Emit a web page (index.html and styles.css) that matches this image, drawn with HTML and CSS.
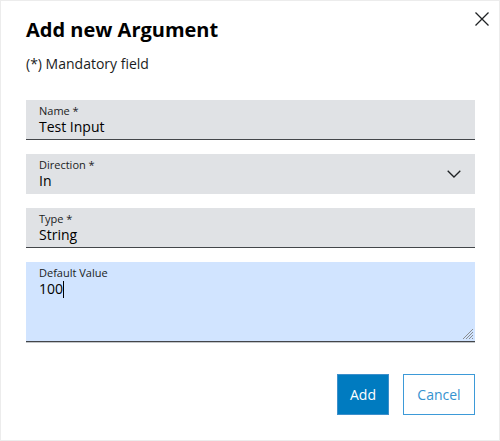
FILE: index.html
```html
<!DOCTYPE html>
<html lang="en">
<head>
<meta charset="utf-8">
<title>Add new Argument</title>
<link rel="stylesheet" href="styles.css">
</head>
<body>
<div class="dialog">
  <div class="header">
    <h1 class="title">Add new Argument</h1>
    <button class="close" aria-label="Close">
      <svg width="14" height="14" viewBox="0 0 14 14"><path d="M0.5 0.5 L13.5 13.5 M13.5 0.5 L0.5 13.5" stroke="#1f2224" stroke-width="1.3" fill="none"/></svg>
    </button>
  </div>
  <div class="body">
    <p class="hint">(*) Mandatory field</p>
    <div class="fields">
      <div class="field underline">
        <span class="label">Name *</span>
        <span class="value">Test Input</span>
      </div>
      <div class="field select">
        <div class="field-text">
          <span class="label">Direction *</span>
          <span class="value">In</span>
        </div>
        <svg class="chevron" width="14" height="8" viewBox="0 0 14 8"><path d="M0.7 0.7 L7 7 L13.3 0.7" stroke="#1f2224" stroke-width="1.3" fill="none"/></svg>
      </div>
      <div class="field underline">
        <span class="label">Type *</span>
        <span class="value">String</span>
      </div>
      <div class="field area underline">
        <span class="label">Default Value</span>
        <span class="value">100<span class="caret"></span></span>
        <svg class="grip" width="11" height="11" viewBox="0 0 11 11"><path d="M11 1 L1 11 M11 4 L4 11 M11 7 L7 11 M11 10 L10 11" stroke="#8a8d90" stroke-width="1" fill="none"/></svg>
      </div>
    </div>
    <div class="actions">
      <button class="btn primary">Add</button>
      <button class="btn secondary">Cancel</button>
    </div>
  </div>
</div>
</body>
</html>
```

FILE: styles.css
```css
* { box-sizing: border-box; }
html, body { margin: 0; padding: 0; background: #fff; }
body { font-family: "Open Sans", "Noto Sans", sans-serif; color: #1a1c1d; }
.dialog {
  width: 500px;
  height: 441px;
  border: 1px solid #ececec;
  background: #fff;
}
.header {
  display: flex;
  justify-content: space-between;
  align-items: flex-start;
  padding: 11px 10px 0 25px;
}
.title {
  margin: 4px 0 0 0;
  font-size: 20px;
  line-height: 28px;
  font-weight: 700;
  color: #000;
}
.close {
  border: 0;
  background: none;
  padding: 0;
  width: 14px;
  height: 14px;
  display: block;
  cursor: pointer;
}
.close svg { display: block; }
.body { padding: 0 24px 0 25px; }
.hint {
  margin: 10px 0 0 0;
  font-size: 14px;
  line-height: 20px;
}
.fields {
  margin-top: 26px;
  display: flex;
  flex-direction: column;
  gap: 14px;
}
.field {
  height: 40px;
  background: #e0e2e5;
  padding: 4px 13px 0 13px;
  display: flex;
  flex-direction: column;
}
.field.underline { border-bottom: 1px solid #43464a; }
.field.select {
  flex-direction: row;
  align-items: center;
  justify-content: space-between;
  padding: 0 14px 0 13px;
}
.field-text { display: flex; flex-direction: column; padding-top: 4px; align-self: stretch; }
.label {
  font-size: 11px;
  line-height: 14px;
  color: #1a1c1d;
}
.value {
  font-size: 14px;
  line-height: 18px;
  color: #000;
}
.chevron { display: block; }
.field.area {
  height: 80px;
  background: #d1e4ff;
  position: relative;
  box-shadow: 0 1px 0 #c3c6c9;
}
.caret {
  display: inline-block;
  width: 1px;
  height: 17px;
  background: #000;
  vertical-align: -4px;
}
.grip { position: absolute; right: 2px; bottom: 2px; }
.actions {
  margin-top: 32px;
  display: flex;
  justify-content: flex-end;
  gap: 14px;
}
.btn {
  height: 41px;
  font-family: "Open Sans", "Noto Sans", sans-serif;
  font-size: 14px;
  padding: 0 12px;
  border: 1px solid #3d9ad8;
  cursor: pointer;
}
.primary { background: #007bc0; color: #fff; border-color: #3d8fcb; }
.secondary { background: #fff; color: #3592cf; min-width: 72px; }
```
